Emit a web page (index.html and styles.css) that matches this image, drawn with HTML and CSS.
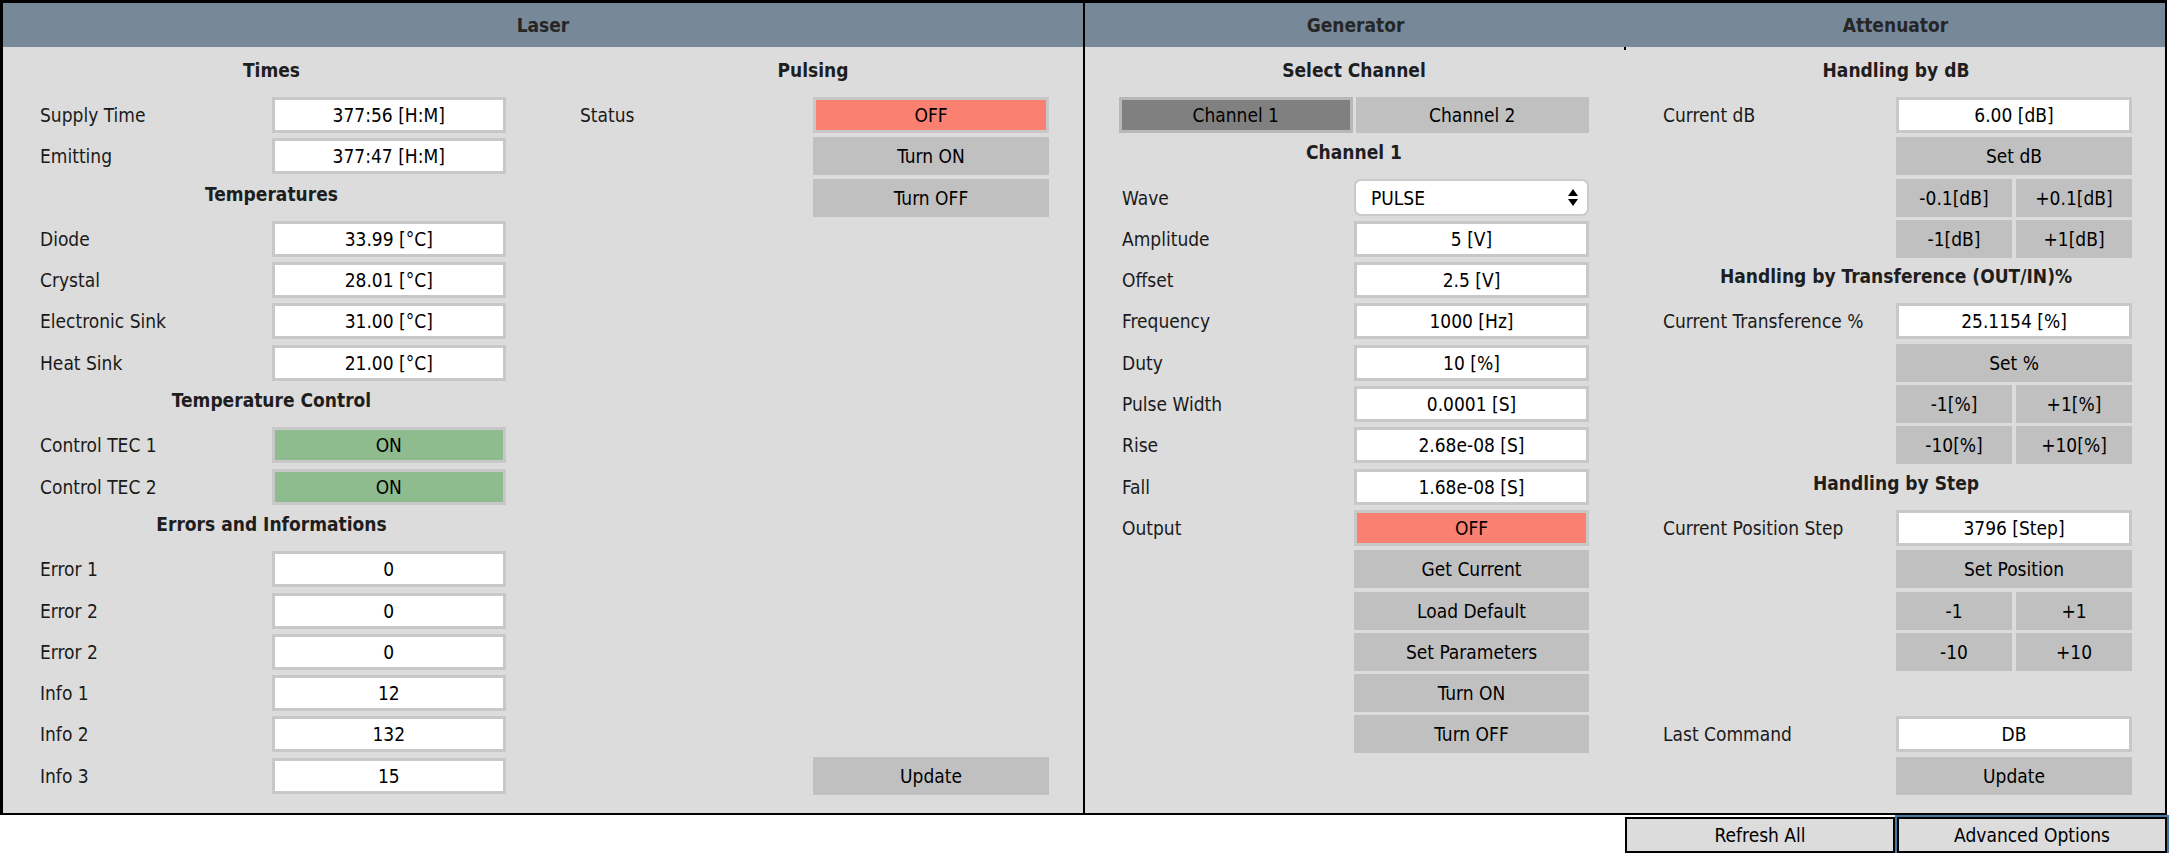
FILE: index.html
```html
<!DOCTYPE html>
<html lang="en">
<head>
<meta charset="utf-8">
<title>Laser Control</title>
<link rel="stylesheet" href="styles.css">
</head>
<body>
<div class="frame">
  <section class="panel laser">
    <h2 class="panel-title">Laser</h2>
    <div class="laser-body">
      <div class="col">
        <h3 class="sec">Times</h3>
        <div class="row"><span class="lbl">Supply Time</span><span class="val">377:56 [H:M]</span></div>
        <div class="row"><span class="lbl">Emitting</span><span class="val">377:47 [H:M]</span></div>
        <h3 class="sec">Temperatures</h3>
        <div class="row"><span class="lbl">Diode</span><span class="val">33.99 [°C]</span></div>
        <div class="row"><span class="lbl">Crystal</span><span class="val">28.01 [°C]</span></div>
        <div class="row"><span class="lbl">Electronic Sink</span><span class="val">31.00 [°C]</span></div>
        <div class="row"><span class="lbl">Heat Sink</span><span class="val">21.00 [°C]</span></div>
        <h3 class="sec">Temperature Control</h3>
        <div class="row"><span class="lbl">Control TEC 1</span><span class="val on">ON</span></div>
        <div class="row"><span class="lbl">Control TEC 2</span><span class="val on">ON</span></div>
        <h3 class="sec">Errors and Informations</h3>
        <div class="row"><span class="lbl">Error 1</span><span class="val">0</span></div>
        <div class="row"><span class="lbl">Error 2</span><span class="val">0</span></div>
        <div class="row"><span class="lbl">Error 2</span><span class="val">0</span></div>
        <div class="row"><span class="lbl">Info 1</span><span class="val">12</span></div>
        <div class="row"><span class="lbl">Info 2</span><span class="val">132</span></div>
        <div class="row"><span class="lbl">Info 3</span><span class="val">15</span></div>
      </div>
      <div class="col col-right">
        <h3 class="sec">Pulsing</h3>
        <div class="row"><span class="lbl">Status</span><span class="val off">OFF</span></div>
        <div class="row"><span></span><button class="btn">Turn ON</button></div>
        <div class="row"><span></span><button class="btn">Turn OFF</button></div>
        <div class="row bottom"><span></span><button class="btn">Update</button></div>
      </div>
    </div>
  </section>

  <section class="panel gen">
    <h2 class="panel-title">Generator</h2>
    <div class="col">
      <h3 class="sec">Select Channel</h3>
      <div class="row channels"><button class="chan active">Channel 1</button><button class="chan">Channel 2</button></div>
      <h3 class="sec">Channel 1</h3>
      <div class="row"><span class="lbl">Wave</span>
        <span class="select"><span>PULSE</span>
          <svg class="arrows" width="10" height="17" viewBox="0 0 10 17"><path d="M5 0 L10 7 L0 7 Z M0 10 L10 10 L5 17 Z" fill="#000"/></svg>
        </span>
      </div>
      <div class="row"><span class="lbl">Amplitude</span><span class="val">5 [V]</span></div>
      <div class="row"><span class="lbl">Offset</span><span class="val">2.5 [V]</span></div>
      <div class="row"><span class="lbl">Frequency</span><span class="val">1000 [Hz]</span></div>
      <div class="row"><span class="lbl">Duty</span><span class="val">10 [%]</span></div>
      <div class="row"><span class="lbl">Pulse Width</span><span class="val">0.0001 [S]</span></div>
      <div class="row"><span class="lbl">Rise</span><span class="val">2.68e-08 [S]</span></div>
      <div class="row"><span class="lbl">Fall</span><span class="val">1.68e-08 [S]</span></div>
      <div class="row"><span class="lbl">Output</span><span class="val off">OFF</span></div>
      <div class="row"><span></span><button class="btn">Get Current</button></div>
      <div class="row"><span></span><button class="btn">Load Default</button></div>
      <div class="row"><span></span><button class="btn">Set Parameters</button></div>
      <div class="row"><span></span><button class="btn">Turn ON</button></div>
      <div class="row"><span></span><button class="btn">Turn OFF</button></div>
    </div>
  </section>

  <section class="panel att">
    <h2 class="panel-title">Attenuator</h2>
    <div class="col col-att">
      <h3 class="sec">Handling by dB</h3>
      <div class="row"><span class="lbl">Current dB</span><span class="val">6.00 [dB]</span></div>
      <div class="row"><span></span><button class="btn">Set dB</button></div>
      <div class="row"><span></span><span class="pair"><button class="btn">-0.1[dB]</button><button class="btn">+0.1[dB]</button></span></div>
      <div class="row"><span></span><span class="pair"><button class="btn">-1[dB]</button><button class="btn">+1[dB]</button></span></div>
      <h3 class="sec">Handling by Transference (OUT/IN)%</h3>
      <div class="row"><span class="lbl">Current Transference %</span><span class="val">25.1154 [%]</span></div>
      <div class="row"><span></span><button class="btn">Set %</button></div>
      <div class="row"><span></span><span class="pair"><button class="btn">-1[%]</button><button class="btn">+1[%]</button></span></div>
      <div class="row"><span></span><span class="pair"><button class="btn">-10[%]</button><button class="btn">+10[%]</button></span></div>
      <h3 class="sec">Handling by Step</h3>
      <div class="row"><span class="lbl">Current Position Step</span><span class="val">3796 [Step]</span></div>
      <div class="row"><span></span><button class="btn">Set Position</button></div>
      <div class="row"><span></span><span class="pair"><button class="btn">-1</button><button class="btn">+1</button></span></div>
      <div class="row"><span></span><span class="pair"><button class="btn">-10</button><button class="btn">+10</button></span></div>
      <div class="row"></div>
      <div class="row"><span class="lbl">Last Command</span><span class="val">DB</span></div>
      <div class="row"><span></span><button class="btn">Update</button></div>
    </div>
  </section>
</div>

<div class="actions">
  <button class="action">Refresh All</button>
  <button class="action focused">Advanced Options</button>
</div>
</body>
</html>
```

FILE: styles.css
```css
* { box-sizing: border-box; }

html, body {
  margin: 0;
  padding: 0;
  background: #ffffff;
}

body {
  font-family: "DejaVu Sans Condensed", "DejaVu Sans", sans-serif;
  font-stretch: condensed;
  font-size: 19px;
  color: #1a1a1a;
}

.frame {
  width: 2167px;
  display: grid;
  grid-template-columns: 1082px 541px 1fr;
  border-style: solid;
  border-color: #000;
  border-width: 3px 2px 2px 3px;
  background: #dcdcdc;
}

.panel {
  display: flex;
  flex-direction: column;
  min-width: 0;
}

.laser {
  border-right: 2px solid #000;
}

.att {
  position: relative;
}

.att::before {
  content: "";
  position: absolute;
  left: -2px;
  top: 44px;
  width: 2px;
  height: 3px;
  background: #000;
}

.panel-title {
  margin: 0;
  height: 44px;
  line-height: 44px;
  background: #778899;
  color: #262626;
  font-size: 19px;
  font-weight: bold;
  text-align: center;
}

.laser-body {
  flex: 1;
  display: grid;
  grid-template-columns: 1fr 1fr;
}

.col {
  flex: 1;
  display: flex;
  flex-direction: column;
  padding: 6px 37px 16.6px 34px;
}

.col-right {
  padding-right: 34px;
}

.col-att {
  padding-right: 33px;
}

.sec {
  margin: 0;
  height: 41.3px;
  flex: none;
  padding-bottom: 8px;
  display: flex;
  align-items: center;
  justify-content: center;
  font-size: 19px;
  font-weight: bold;
  color: #1e1e1e;
  white-space: nowrap;
}

.row {
  height: 41.3px;
  flex: none;
  display: grid;
  grid-template-columns: 1fr 1fr;
  align-items: center;
}

.row.bottom {
  margin-top: auto;
}

.lbl {
  padding-left: 3px;
  color: #1a1a1a;
  white-space: nowrap;
}

.val {
  height: 36px;
  line-height: 30px;
  border: 3px solid #c8c8c8;
  background: #fff;
  color: #000;
  text-align: center;
  white-space: nowrap;
}

.val.off {
  background: #fa8072;
}

.val.on {
  background: #8fbc8f;
}

.btn {
  height: 38px;
  width: 100%;
  margin: 0;
  padding: 0;
  border: none;
  background: #c0c0c0;
  color: #000;
  font: inherit;
  text-align: center;
  white-space: nowrap;
}

.pair {
  display: grid;
  grid-template-columns: 1fr 1fr;
  column-gap: 4px;
}

.channels {
  column-gap: 3px;
}

.chan {
  height: 36px;
  margin: 0;
  padding: 0;
  border: none;
  background: #c0c0c0;
  color: #000;
  font: inherit;
}

.chan.active {
  background: #808080;
  border: 3px solid #b8b8b8;
}

.select {
  height: 37px;
  display: flex;
  align-items: center;
  justify-content: space-between;
  padding: 0 9px 0 15px;
  background: #fff;
  border: 2px solid #cacaca;
  border-radius: 7px;
  color: #000;
}

.arrows {
  display: block;
}

.actions {
  width: 2167px;
  margin-top: 2px;
  display: grid;
  grid-template-columns: 1fr 270px 270px;
  column-gap: 2px;
}

.action {
  height: 36px;
  margin: 0;
  padding: 0;
  border: 2px solid #000;
  background: #dcdcdc;
  color: #000;
  font: inherit;
}

.actions .action:first-child {
  grid-column: 2;
}

.action.focused {
  outline: 2px solid #4679a8;
  outline-offset: 0;
}
```
